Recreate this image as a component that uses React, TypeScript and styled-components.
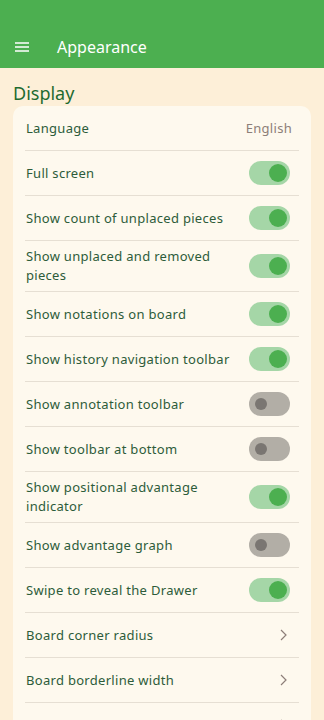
import * as React from "react";
import styled, { createGlobalStyle } from "styled-components";

const GlobalStyle = createGlobalStyle`
  html, body {
    margin: 0;
    padding: 0;
    background: #fdefd8;
    overflow: hidden;
  }
  body {
    font-family: "Noto Sans", "Liberation Sans", sans-serif;
  }
`;

type Item =
  | { kind: "value"; label: string; value: string }
  | { kind: "switch"; label: string; on: boolean }
  | { kind: "link"; label: string };

const items: Item[] = [
  { kind: "value", label: "Language", value: "English" },
  { kind: "switch", label: "Full screen", on: true },
  { kind: "switch", label: "Show count of unplaced pieces", on: true },
  { kind: "switch", label: "Show unplaced and removed pieces", on: true },
  { kind: "switch", label: "Show notations on board", on: true },
  { kind: "switch", label: "Show history navigation toolbar", on: true },
  { kind: "switch", label: "Show annotation toolbar", on: false },
  { kind: "switch", label: "Show toolbar at bottom", on: false },
  { kind: "switch", label: "Show positional advantage indicator", on: true },
  { kind: "switch", label: "Show advantage graph", on: false },
  { kind: "switch", label: "Swipe to reveal the Drawer", on: true },
  { kind: "link", label: "Board corner radius" },
  { kind: "link", label: "Board borderline width" },
  { kind: "link", label: "Board gridline width" },
];

const Page = styled.div`
  min-height: 720px;
  background: #fdefd8;
`;

const AppBar = styled.header`
  background: #4caf50;
  height: 68px;
  padding-top: 26px;
  box-sizing: border-box;
  display: flex;
  align-items: center;
  color: #ffffff;
`;

const MenuButton = styled.div`
  width: 57px;
  padding-left: 15px;
  box-sizing: border-box;
  display: flex;
  align-items: center;
`;

const Title = styled.h1`
  margin: 0;
  font-size: 16px;
  font-weight: 400;
`;

const SectionTitle = styled.h2`
  margin: 0;
  padding: 13px 13px 1px;
  font-size: 18px;
  line-height: 24px;
  font-weight: 400;
  color: #1f6b30;
`;

const Card = styled.div`
  margin: 0 13px;
  padding: 0 12px;
  background: #fef9ee;
  border-radius: 10px;
`;

const Row = styled.div<{ $tall?: boolean }>`
  display: flex;
  align-items: center;
  justify-content: space-between;
  min-height: ${(p) => (p.$tall ? 50 : 44)}px;
  border-bottom: 1px solid #e6dfd3;
  gap: 12px;
`;

const Label = styled.span`
  font-size: 13px;
  line-height: 19px;
  letter-spacing: 0.3px;
  color: #2d5c3a;
  padding-left: 1px;
`;

const Value = styled.span`
  font-size: 13px;
  letter-spacing: 0.3px;
  color: #8d7e78;
  margin-right: 7px;
`;

const Track = styled.div<{ $on: boolean }>`
  flex: none;
  width: 41px;
  height: 24px;
  border-radius: 12px;
  margin-right: 9px;
  background: ${(p) => (p.$on ? "#a5d6a7" : "#b2aea6")};
  display: flex;
  align-items: center;
  justify-content: ${(p) => (p.$on ? "flex-end" : "flex-start")};
  box-sizing: border-box;
  padding: 0 ${(p) => (p.$on ? 3 : 6)}px;
`;

const Thumb = styled.div<{ $on: boolean }>`
  width: ${(p) => (p.$on ? 18 : 12)}px;
  height: ${(p) => (p.$on ? 18 : 12)}px;
  border-radius: 50%;
  background: ${(p) => (p.$on ? "#4caf50" : "#7a7672")};
`;

const Chevron = styled.svg`
  flex: none;
  margin-right: 12px;
`;

const Hamburger = () => (
  <svg width="14" height="12" viewBox="0 0 14 12">
    <path d="M0 2h14M0 6h14M0 10h14" stroke="#fff" strokeWidth="1.6" />
  </svg>
);

const isTall = (label: string) =>
  label === "Show unplaced and removed pieces" ||
  label === "Show positional advantage indicator";

export default function App() {
  return (
    <Page>
      <GlobalStyle />
      <AppBar>
        <MenuButton>
          <Hamburger />
        </MenuButton>
        <Title>Appearance</Title>
      </AppBar>
      <SectionTitle>Display</SectionTitle>
      <Card>
        {items.map((item) => (
          <Row key={item.label} $tall={isTall(item.label)}>
            <Label>{item.label}</Label>
            {item.kind === "value" && <Value>{item.value}</Value>}
            {item.kind === "switch" && (
              <Track $on={item.on}>
                <Thumb $on={item.on} />
              </Track>
            )}
            {item.kind === "link" && (
              <Chevron width="7" height="12" viewBox="0 0 7 12">
                <path
                  d="M1 1l5 5-5 5"
                  fill="none"
                  stroke="#8d7e78"
                  strokeWidth="1.2"
                />
              </Chevron>
            )}
          </Row>
        ))}
      </Card>
    </Page>
  );
}
